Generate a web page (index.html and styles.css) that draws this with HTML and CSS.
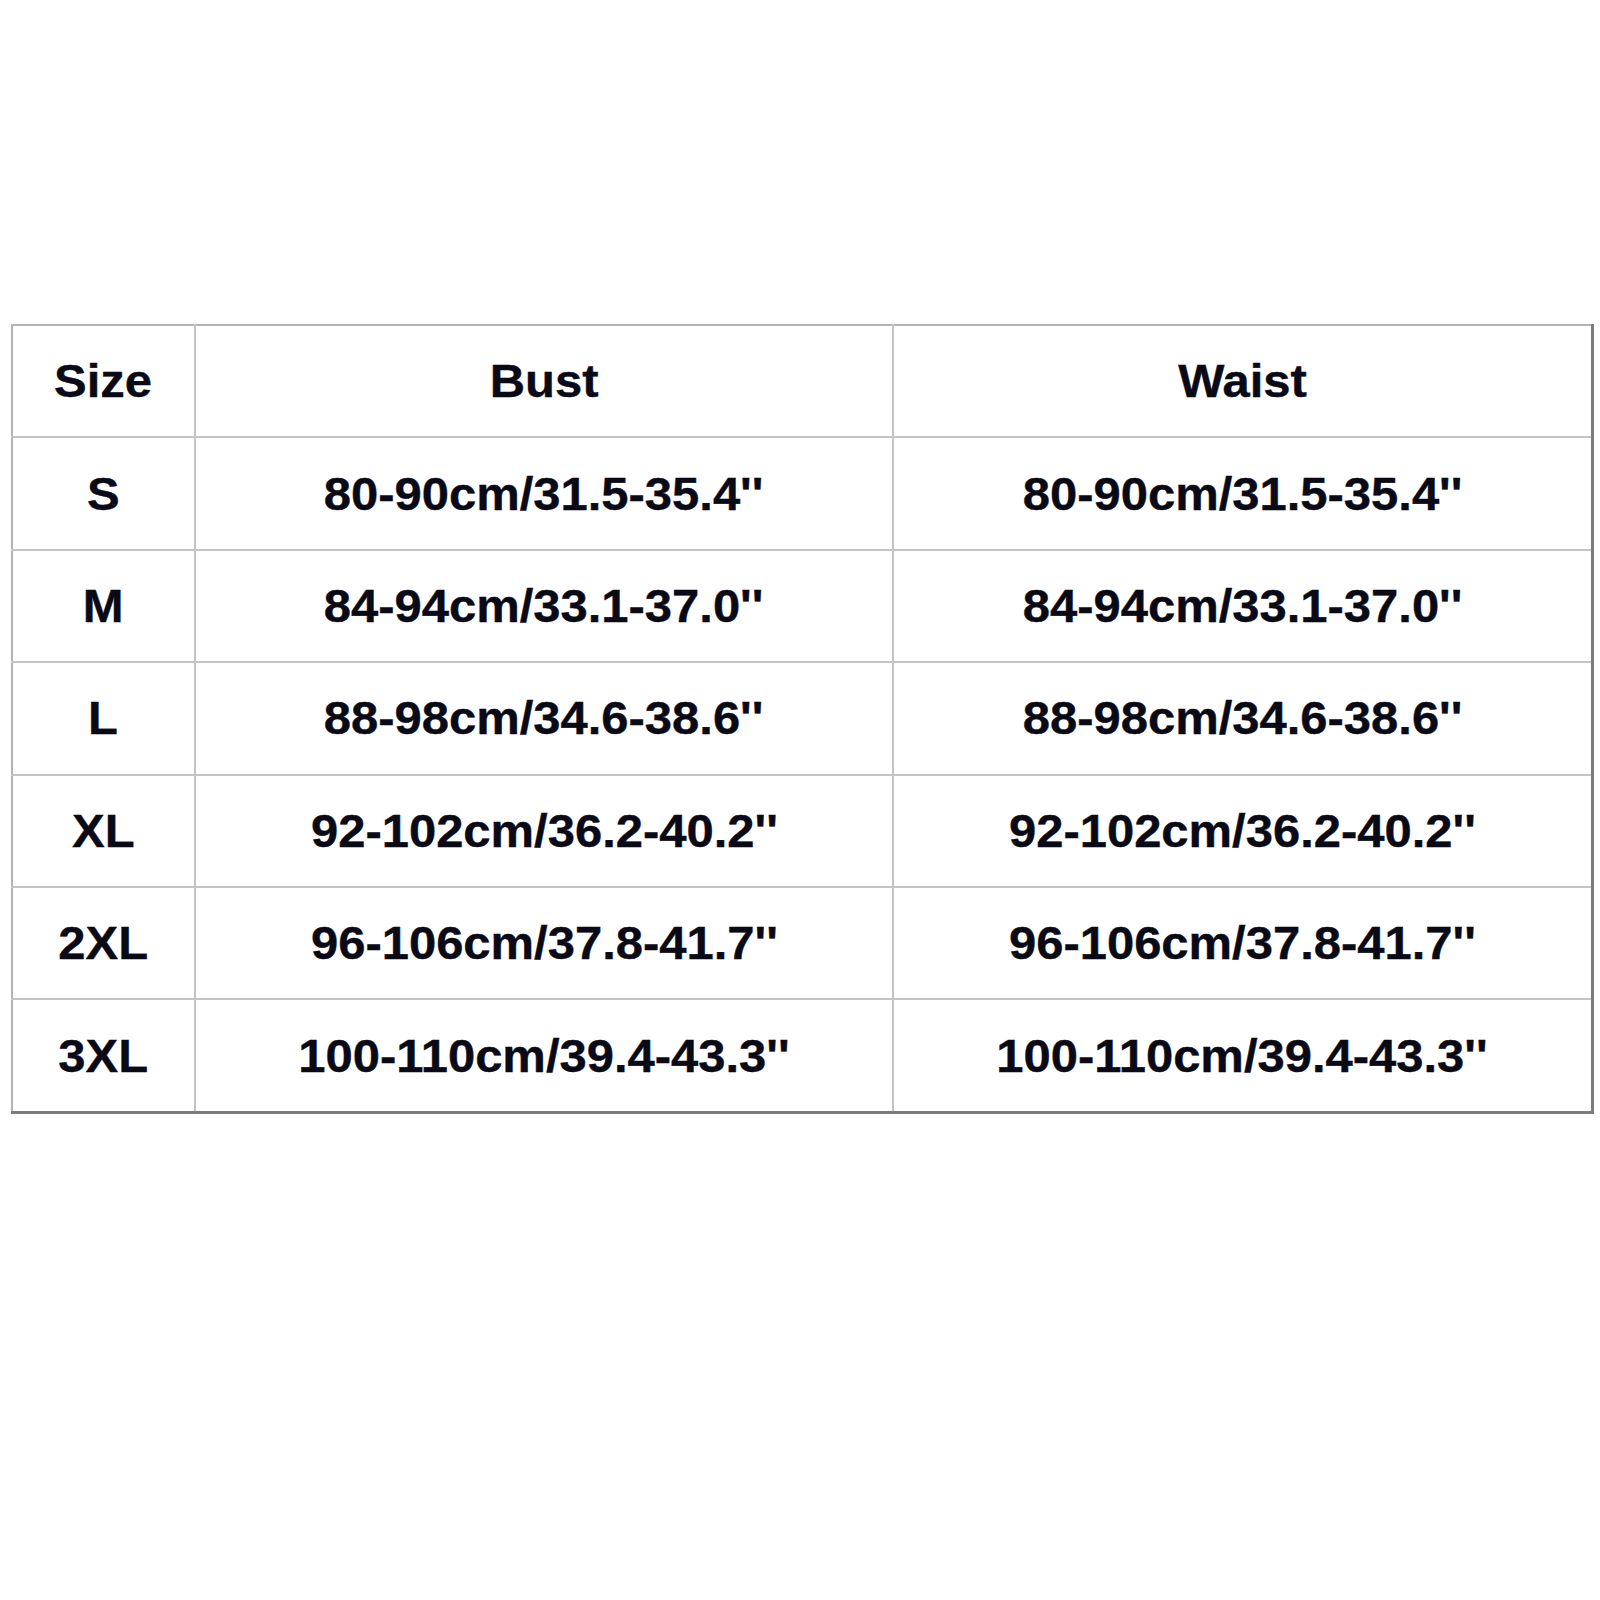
FILE: index.html
```html
<!DOCTYPE html>
<html>
<head>
<meta charset="utf-8">
<link rel="stylesheet" href="styles.css">
</head>
<body>
<table class="size-table">
  <colgroup>
    <col class="c-size">
    <col class="c-bust">
    <col class="c-waist">
  </colgroup>
  <tr><th><span class="t">Size</span></th><th><span class="t">Bust</span></th><th><span class="t">Waist</span></th></tr>
  <tr><td><span class="t">S</span></td><td><span class="t">80-90cm/31.5-35.4''</span></td><td><span class="t">80-90cm/31.5-35.4''</span></td></tr>
  <tr><td><span class="t">M</span></td><td><span class="t">84-94cm/33.1-37.0''</span></td><td><span class="t">84-94cm/33.1-37.0''</span></td></tr>
  <tr><td><span class="t">L</span></td><td><span class="t">88-98cm/34.6-38.6''</span></td><td><span class="t">88-98cm/34.6-38.6''</span></td></tr>
  <tr><td><span class="t">XL</span></td><td><span class="t">92-102cm/36.2-40.2''</span></td><td><span class="t">92-102cm/36.2-40.2''</span></td></tr>
  <tr><td><span class="t">2XL</span></td><td><span class="t">96-106cm/37.8-41.7''</span></td><td><span class="t">96-106cm/37.8-41.7''</span></td></tr>
  <tr><td><span class="t">3XL</span></td><td><span class="t">100-110cm/39.4-43.3''</span></td><td><span class="t">100-110cm/39.4-43.3''</span></td></tr>
</table>
</body>
</html>
```
FILE: styles.css
```css
html, body {
  margin: 0;
  padding: 0;
  background: #ffffff;
}
body {
  width: 1600px;
  height: 1600px;
  font-family: "Liberation Sans", Arial, sans-serif;
}
.size-table {
  margin: 324px 0 0 11px;
  width: 1580px;
  border-collapse: collapse;
  table-layout: fixed;
  border-top: 2px solid #b4b4b4;
  border-left: 2px solid #b4b4b4;
  border-right: 3px solid #7c7c7c;
  border-bottom: 3px solid #7c7c7c;
}
.c-size { width: 183px; }
.c-bust { width: 698px; }
.c-waist { width: 699px; }
.size-table th,
.size-table td {
  height: 110.4px;
  padding: 0;
  border: 2px solid #c4c4c4;
  text-align: center;
  vertical-align: middle;
  font-weight: bold;
  font-size: 46px;
  color: #0a0a16;
}
.size-table tr:first-child th { border-top-color: #b4b4b4; }
.size-table tr th:first-child,
.size-table tr td:first-child { border-left-color: #b4b4b4; }
.size-table tr th:last-child,
.size-table tr td:last-child { border-right-color: #7c7c7c; }
.size-table tr:last-child td { border-bottom-color: #7c7c7c; }
.t {
  display: inline-block;
  transform: scaleX(1.064);
  white-space: nowrap;
  -webkit-text-stroke: 0.4px #0a0a16;
}
```
